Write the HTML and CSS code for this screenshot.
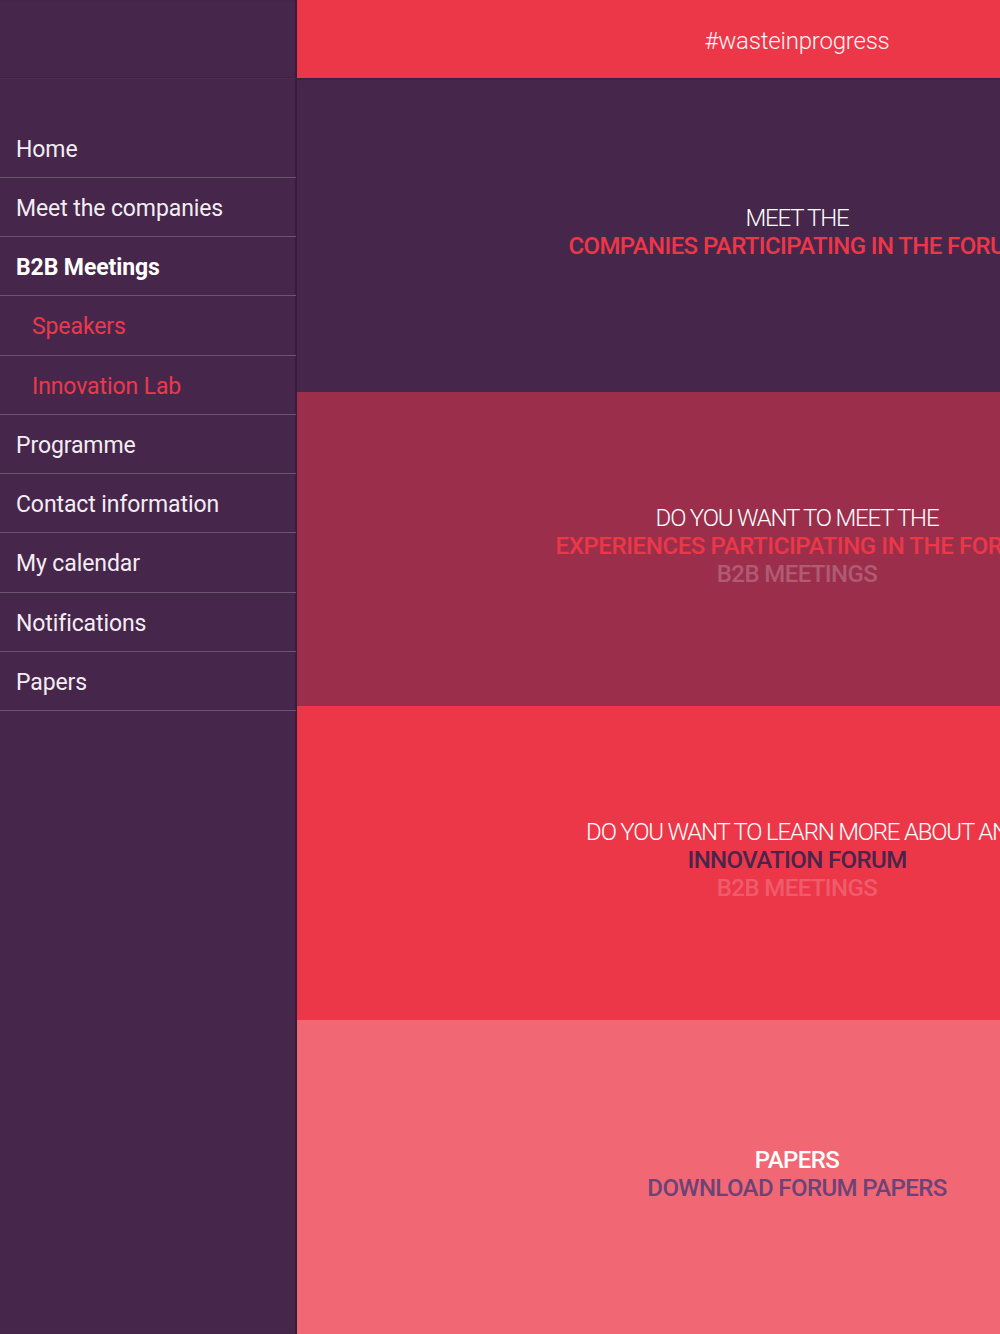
FILE: index.html
```html
<!DOCTYPE html>
<html lang="en">
<head>
<meta charset="utf-8">
<title>Waste in progress</title>
<link rel="stylesheet" href="styles.css">
</head>
<body>
<div class="app">
  <aside class="sidebar">
    <div class="sidebar-top"></div>
    <nav class="menu">
      <a class="item">Home</a>
      <a class="item">Meet the companies</a>
      <a class="item active">B2B Meetings</a>
      <a class="item sub">Speakers</a>
      <a class="item sub">Innovation Lab</a>
      <a class="item">Programme</a>
      <a class="item">Contact information</a>
      <a class="item">My calendar</a>
      <a class="item">Notifications</a>
      <a class="item">Papers</a>
    </nav>
  </aside>
  <main class="main">
    <header class="topbar">#wasteinprogress</header>
    <section class="panel p1">
      <div class="lines">
        <div class="light">MEET THE</div>
        <div class="bold red">COMPANIES PARTICIPATING IN THE FORUM</div>
      </div>
    </section>
    <section class="panel p2">
      <div class="lines">
        <div class="light">DO YOU WANT TO MEET THE</div>
        <div class="bold red wide">EXPERIENCES PARTICIPATING IN THE FORUM</div>
        <div class="bold faint">B2B MEETINGS</div>
      </div>
    </section>
    <section class="panel p3">
      <div class="lines">
        <div class="light">DO YOU WANT TO LEARN MORE ABOUT AN</div>
        <div class="bold purple">INNOVATION FORUM</div>
        <div class="bold faint2">B2B MEETINGS</div>
      </div>
    </section>
    <section class="panel p4">
      <div class="lines">
        <div class="bold white">PAPERS</div>
        <div class="bold violet">DOWNLOAD FORUM PAPERS</div>
      </div>
    </section>
  </main>
</div>
</body>
</html>
```

FILE: styles.css
```css
* { box-sizing: border-box; }
html, body {
  margin: 0;
  padding: 0;
  width: 1000px;
  height: 1334px;
  overflow: hidden;
  background: #46254b;
  font-family: Roboto, "Liberation Sans", sans-serif;
}
.app {
  display: flex;
  width: 1000px;
  height: 1334px;
  overflow: hidden;
}
.sidebar {
  flex: 0 0 297px;
  height: 1334px;
  background: #47264b;
  box-shadow: inset -2px 0 1px rgba(30, 10, 30, 0.35);
  position: relative;
  z-index: 2;
}
.sidebar-top {
  height: 78px;
  border-bottom: 1px solid #3f2144;
  box-shadow: 0 1px 0 rgba(255,255,255,0.03);
}
.menu {
  display: flex;
  flex-direction: column;
  padding-top: 40.5px;
  padding-right: 1px;
}
.item {
  display: flex;
  align-items: center;
  height: 59.25px;
  padding-left: 16px;
  padding-top: 3px;
  color: #f3edf3;
  font-size: 23px;
  font-weight: 400;
  letter-spacing: -0.1px;
  border-bottom: 1px solid #6d5572;
}
.item.active { font-weight: 700; color: #ffffff; }
.item.sub { padding-left: 32px; color: #e93a4c; }
.main {
  flex: 0 0 1000px;
  display: flex;
  flex-direction: column;
}
.topbar {
  height: 78px;
  background: #ec3749;
  color: #fff3f4;
  font-size: 24px;
  font-weight: 300;
  letter-spacing: -0.2px;
  display: flex;
  align-items: center;
  justify-content: center;
  padding-top: 4px;
  box-shadow: 0 1px 2px rgba(40, 10, 30, 0.35);
  position: relative;
  z-index: 1;
}
.panel {
  height: 314px;
  display: flex;
  align-items: center;
  justify-content: center;
  padding-bottom: 6px;
}
.p1 { background: #47264b; }
.p2 { background: #9b2f4b; }
.p3 { background: #ec3749; }
.p4 { background: #f16874; }
.lines {
  text-align: center;
  font-size: 24px;
  line-height: 28px;
  white-space: nowrap;
}
.light { font-weight: 300; color: #ffffff; letter-spacing: -1.2px; }
.bold { font-weight: 500; letter-spacing: -0.6px; }
.bold.wide { letter-spacing: -0.4px; }
.red { color: #ec3749; }
.faint { color: #b05a73; }
.faint2 { color: #f05b6b; }
.purple { color: #47264b; }
.white { color: #ffffff; }
.violet { color: #6c4377; }
```
